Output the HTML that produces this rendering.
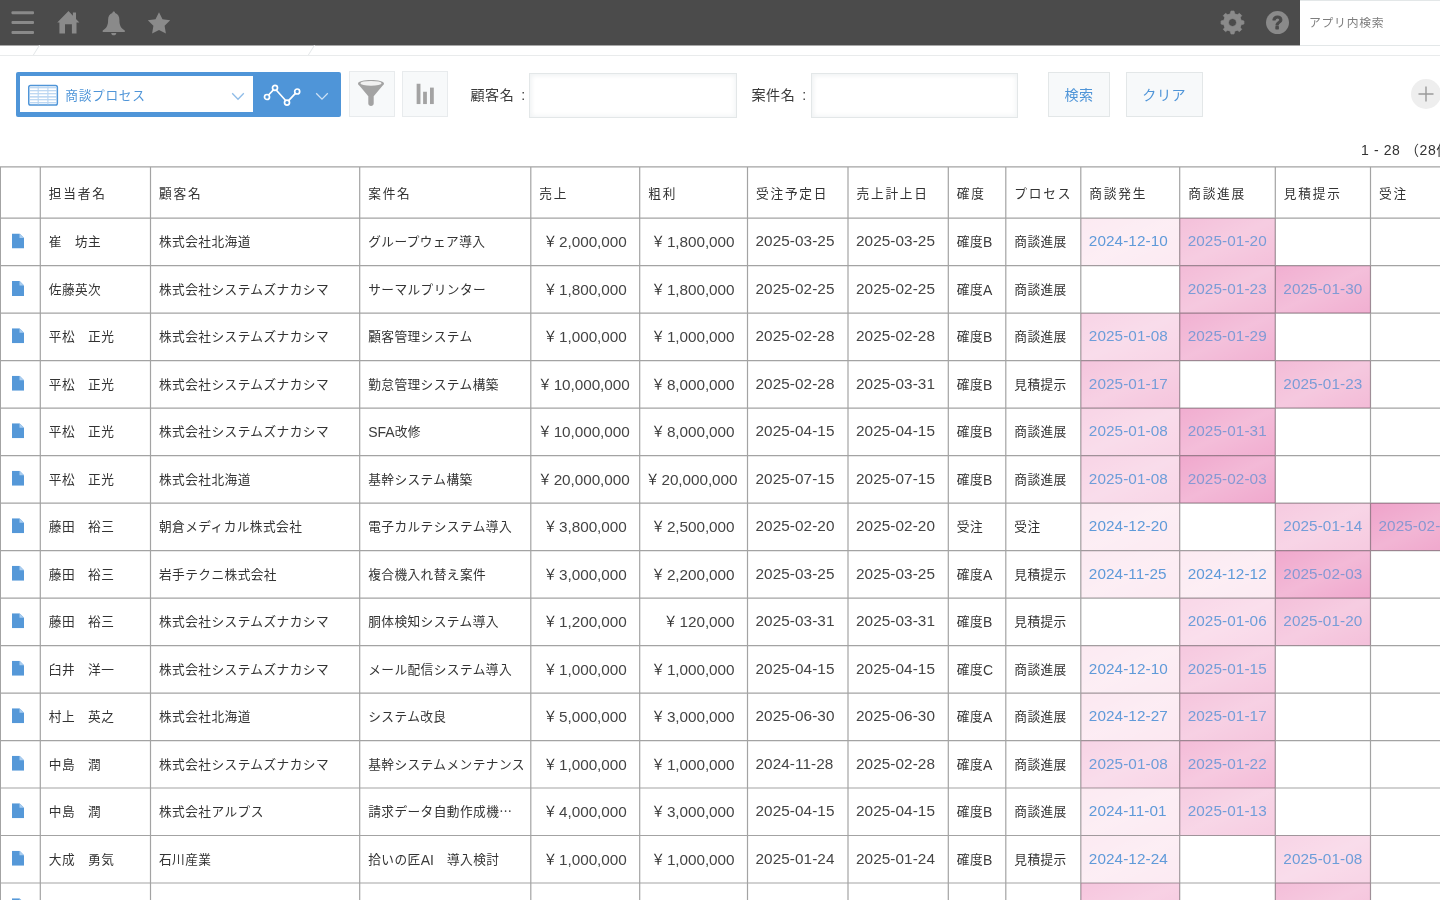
<!DOCTYPE html>
<html lang="ja">
<head>
<meta charset="utf-8">
<title>商談プロセス</title>
<style>
html,body{margin:0;padding:0}
body{width:1440px;height:900px;overflow:hidden;background:#fff;position:relative;
  font-family:"Liberation Sans","Noto Sans CJK JP",sans-serif;font-size:12.7px;letter-spacing:.42px;color:#333;font-weight:400}
*{box-sizing:border-box}
.abs{position:absolute}
/* ---------- global header ---------- */
.hdr{position:absolute;left:0;top:0;width:1440px;height:46px;background:#4b4b4b;border-bottom:1px solid #a8a8a8}
.hdr svg{position:absolute}
.srch{position:absolute;left:1300px;top:0;width:140px;height:46px;background:#fff;border-top:1px solid #e3e7e8;border-bottom:1px solid #e3e7e8;
  font-size:11.8px;letter-spacing:.75px;color:#7d7d7d;line-height:44px;padding-left:9px;white-space:nowrap}
.crumb{position:absolute;left:0;top:46px;width:1440px;height:9.5px;border-bottom:1px solid #e9ebec;background:#fff}
.crumb i{position:absolute;top:-1px;height:10px;width:1px;background:#e3e7e8;transform:skewX(-32deg)}
/* ---------- toolbar ---------- */
.view{position:absolute;left:15.5px;top:72px;width:325.5px;height:44.5px;background:#4f95d8;border-radius:2px}
.view .sel{position:absolute;left:4.5px;top:4px;width:233px;height:36px;background:#fff}
.view .name{position:absolute;left:45.3px;top:.5px;line-height:38px;font-weight:400;color:#4f95d8;font-size:12.7px;letter-spacing:.7px;white-space:nowrap}
.btn{position:absolute;top:71px;height:46px;background:#f7f9fa;border:1px solid #e8ebed}
.lbl{position:absolute;top:84px;height:22px;line-height:22px;font-size:14.1px;letter-spacing:.5px;white-space:nowrap;color:#3a3a3a;word-spacing:2.5px}
.inp{position:absolute;top:73px;height:45px;background:#fff;border:1px solid #e3e7e8;box-shadow:inset 2px 2px 4px #f1f3f4, inset -2px -2px 4px #f5f7f8}
.tbtn{position:absolute;top:72px;height:45px;background:#f7f9fa;border:1px solid #e3e7e8;color:#4f95d8;font-size:14.1px;letter-spacing:.5px;text-align:center;line-height:44px;white-space:nowrap}
.plus{position:absolute;left:1411px;top:78.8px;width:30px;height:30px;border-radius:50%;background:#eeeeee}
.pager{position:absolute;left:1361px;top:139px;height:22px;line-height:22px;font-size:14px;white-space:nowrap;color:#333;letter-spacing:.6px}
/* ---------- table ---------- */
.grid{position:absolute;left:0;top:0}
.thead{position:absolute;left:0;width:1440px}
.th{position:absolute;top:0;height:100%;padding-left:8.5px;display:flex;align-items:center;letter-spacing:1.77px;white-space:nowrap;color:#333}
.tr{position:absolute;left:0;top:0;width:1440px;height:47.5px}
.td{position:absolute;top:0;height:47.5px;padding-left:8.5px;display:flex;align-items:center;white-space:nowrap;overflow:visible}
.td.c0{padding-left:11.7px}
.td.num{justify-content:flex-end;padding-left:0;padding-right:13px}
.td.num.wide{padding-right:10px}
.l{font-size:15.3px;letter-spacing:-.05px;color:#444;position:relative;top:.3px}
.td.dt{padding-left:8px}
.td.dt .l{letter-spacing:.08px}
.yen{font-size:13.8px;letter-spacing:0;margin-right:1.9px;position:relative;top:-.5px}
.td.lk .l{color:inherit}
.a{font-size:14px;letter-spacing:0;color:#3c3c3c;position:relative;top:.5px}
.el{font-family:"Noto Sans CJK JP",sans-serif}
.td.lk{color:#4a8fd6}
.sp{font-size:0;letter-spacing:0}
.doc{display:block;position:relative;top:.2px}
</style>
</head>
<body>
<div id="app" style="position:absolute;left:0;top:0;width:1440px;height:900px;will-change:transform">
<!-- global header -->
<div class="hdr">
  <svg style="left:11px;top:10px" width="24" height="25" viewBox="0 0 24 25"><g fill="#8a8a8a"><rect x="0.5" y="1.3" width="22.5" height="2.9" rx="1"/><rect x="0.5" y="11.1" width="22.5" height="2.9" rx="1"/><rect x="0.5" y="21.1" width="22.5" height="2.9" rx="1"/></g></svg>
  <svg style="left:56px;top:10px" width="25" height="25" viewBox="0 0 25 25"><path fill="#8a8a8a" d="M12.5 1.1 L1.25 12.4 H3.4 V23.6 H9 V14.25 H15.9 V23.6 H20.5 V12.4 H23.4 L20 8.9 V2.4 H16.9 V5.66 Z"/></svg>
  <svg style="left:102px;top:9.5px" width="25" height="27" viewBox="0 0 25 27"><path fill="#8a8a8a" d="M11.75 1.6 C12.6 1.6 13.1 2.2 13.1 3.1 C16 3.9 17.4 6.6 17.4 10 C17.4 15 18.6 18 22.8 20.6 V22 H0.7 V20.6 C4.9 18 6.1 15 6.1 10 C6.1 6.6 7.5 3.9 10.4 3.1 C10.4 2.2 10.9 1.6 11.75 1.6 Z M9.25 22.9 H14.25 C14.25 24.4 13.2 25.3 11.75 25.3 C10.3 25.3 9.25 24.4 9.25 22.9 Z"/></svg>
  <svg style="left:147.4px;top:10.8px" width="24" height="24" viewBox="0 0 24 24"><path fill="#8a8a8a" d="M12 1.2 L15.5 8.2 L23.2 9.3 L17.6 14.8 L18.9 22.5 L12 18.9 L5.1 22.5 L6.4 14.8 L0.8 9.3 L8.5 8.2 Z"/></svg>
  <svg style="left:1219.6px;top:9.6px" width="25" height="25" viewBox="-12.5 -12.5 25 25"><path fill="#8a8a8a" fill-rule="evenodd" stroke="#8a8a8a" stroke-width="0.8" stroke-linejoin="round" d="M-2.10 -8.75 L-1.50 -11.40 L1.50 -11.40 L2.10 -8.75 L4.70 -7.67 L7.00 -9.12 L9.12 -7.00 L7.67 -4.70 L8.75 -2.10 L11.40 -1.50 L11.40 1.50 L8.75 2.10 L7.67 4.70 L9.12 7.00 L7.00 9.12 L4.70 7.67 L2.10 8.75 L1.50 11.40 L-1.50 11.40 L-2.10 8.75 L-4.70 7.67 L-7.00 9.12 L-9.12 7.00 L-7.67 4.70 L-8.75 2.10 L-11.40 1.50 L-11.40 -1.50 L-8.75 -2.10 L-7.67 -4.70 L-9.12 -7.00 L-7.00 -9.12 L-4.70 -7.67 Z M0 -4.00 A4.00 4.00 0 1 0 0.01 -4.00 Z"/></svg>
  <svg style="left:1265px;top:10px" width="25" height="25" viewBox="0 0 25 25"><circle cx="12.5" cy="12.6" r="11.5" fill="#8a8a8a"/><text x="12.5" y="19.2" text-anchor="middle" style="font:bold 18px 'Liberation Sans',sans-serif;letter-spacing:0" fill="#4b4b4b" stroke="#4b4b4b" stroke-width=".9" stroke-linejoin="round">?</text></svg>
</div>
<div class="srch">アプリ内検索</div>
<div class="crumb"><i style="left:35.5px"></i><i style="left:311px"></i></div>

<!-- toolbar -->
<div class="view">
  <div class="sel">
    <svg class="abs" style="left:7.1px;top:7.7px" width="33" height="23" viewBox="0 0 33 23"><rect x="1.75" y="1.55" width="28.6" height="19.4" rx="1.8" fill="#fff" stroke="#4f95d8" stroke-width="1.5"/><path d="M2.5 3.7H29.6M2.5 6.8H29.6M2.5 9.8H29.6M2.5 12.9H29.6M2.5 15.8H29.6M2.5 18.8H29.6" stroke="#a9cbee" stroke-width="1.1" fill="none"/><path d="M11.2 2.3V20.2M20.9 2.3V20.2" stroke="#b9d5f1" stroke-width="1.1" fill="none"/></svg>
    <div class="name">商談プロセス</div>
    <svg class="abs" style="left:211px;top:15.5px" width="14" height="9" viewBox="0 0 14 9"><path d="M1.2 1.2L7 7.2L12.8 1.2" fill="none" stroke="#8fbce8" stroke-width="1.3"/></svg>
  </div>
  <svg class="abs" style="left:245px;top:11px" width="42" height="26" viewBox="0 0 42 26"><g fill="none" stroke="#fff" stroke-width="1.7"><path d="M7.6 12L12.4 6.8M15.4 7.2L24.4 17.2M27.6 17.6L34.4 10.4"/><circle cx="6" cy="14" r="2.5"/><circle cx="14" cy="4.8" r="2.5"/><circle cx="26" cy="19.6" r="2.5"/><circle cx="36.2" cy="8.5" r="2.5"/></g></svg>
  <svg class="abs" style="left:299px;top:19.5px" width="14" height="9" viewBox="0 0 14 9"><path d="M1.2 1.2L7 7.2L12.8 1.2" fill="none" stroke="#fff" stroke-width="1.25" opacity=".72"/></svg>
</div>
<div class="btn" style="left:349px;width:45.5px">
  <svg class="abs" style="left:7px;top:7.3px" width="28" height="28" viewBox="0 0 28 28"><path fill="#a3a3a3" d="M1 4.5 C1 2.3 7 1 14 1 C21 1 27 2.3 27 4.5 C27 5.4 26.3 6 25.5 6.8 L16.7 17.2 V24.6 C16.7 26.2 15.5 27 14 27 C12.5 27 11.3 26.2 11.3 24.6 V17.2 L2.5 6.8 C1.7 6 1 5.4 1 4.5 Z"/><ellipse cx="14" cy="4.3" rx="10.6" ry="2.4" fill="#f1f1f1"/></svg>
</div>
<div class="btn" style="left:402px;width:46px">
  <svg class="abs" style="left:13px;top:11px" width="19" height="23" viewBox="0 0 19 23"><g fill="#a3a3a3"><rect x="0.65" y="0.75" width="3.8" height="20.3"/><rect x="7.1" y="8.75" width="3.8" height="12.3"/><rect x="14" y="4.6" width="3.8" height="16.45"/></g></svg>
</div>
<div class="lbl" style="left:470.5px">顧客名 :</div>
<div class="inp" style="left:529px;width:207.5px"></div>
<div class="lbl" style="left:751.5px">案件名 :</div>
<div class="inp" style="left:811px;width:206.5px"></div>
<div class="tbtn" style="left:1048px;width:62px">検索</div>
<div class="tbtn" style="left:1125.5px;width:77.5px">クリア</div>
<div class="plus"><svg class="abs" style="left:7px;top:7px" width="16" height="16" viewBox="0 0 16 16"><path d="M8 0.5V15.5M0.5 8H15.5" stroke="#9a9a9a" stroke-width="1.4" fill="none"/></svg></div>
<div class="pager">1 - 28 （28件中）</div>

<!-- record table -->
<svg class="grid" width="1440" height="900" viewBox="0 0 1440 900"><defs><linearGradient id="sheen" x1="0" y1="0" x2="1" y2="1"><stop offset="0" stop-color="#fff" stop-opacity="0"/><stop offset=".5" stop-color="#fff" stop-opacity=".2"/><stop offset="1" stop-color="#fff" stop-opacity="0"/></linearGradient></defs><rect x="1080.8" y="218.2" width="98.9" height="47.48" fill="#fceaf2"/><rect x="1080.8" y="218.2" width="98.9" height="47.48" fill="url(#sheen)"/><rect x="1179.7" y="218.2" width="95.6" height="47.48" fill="#f4c0da"/><rect x="1179.7" y="218.2" width="95.6" height="47.48" fill="url(#sheen)"/><rect x="1179.7" y="265.69" width="95.6" height="47.48" fill="#f3bbd7"/><rect x="1179.7" y="265.69" width="95.6" height="47.48" fill="url(#sheen)"/><rect x="1275.3" y="265.69" width="95.2" height="47.48" fill="#f1afd1"/><rect x="1275.3" y="265.69" width="95.2" height="47.48" fill="url(#sheen)"/><rect x="1080.8" y="313.17" width="98.9" height="47.48" fill="#f8d4e6"/><rect x="1080.8" y="313.17" width="98.9" height="47.48" fill="url(#sheen)"/><rect x="1179.7" y="313.17" width="95.6" height="47.48" fill="#f1b1d2"/><rect x="1179.7" y="313.17" width="95.6" height="47.48" fill="url(#sheen)"/><rect x="1080.8" y="360.65" width="98.9" height="47.48" fill="#f5c5dd"/><rect x="1080.8" y="360.65" width="98.9" height="47.48" fill="url(#sheen)"/><rect x="1275.3" y="360.65" width="95.2" height="47.48" fill="#f3bbd7"/><rect x="1275.3" y="360.65" width="95.2" height="47.48" fill="url(#sheen)"/><rect x="1080.8" y="408.14" width="98.9" height="47.48" fill="#f8d4e6"/><rect x="1080.8" y="408.14" width="98.9" height="47.48" fill="url(#sheen)"/><rect x="1179.7" y="408.14" width="95.6" height="47.48" fill="#f1add0"/><rect x="1179.7" y="408.14" width="95.6" height="47.48" fill="url(#sheen)"/><rect x="1080.8" y="455.62" width="98.9" height="47.48" fill="#f8d4e6"/><rect x="1080.8" y="455.62" width="98.9" height="47.48" fill="url(#sheen)"/><rect x="1179.7" y="455.62" width="95.6" height="47.48" fill="#f0a8cd"/><rect x="1179.7" y="455.62" width="95.6" height="47.48" fill="url(#sheen)"/><rect x="1080.8" y="503.11" width="98.9" height="47.48" fill="#fceaf2"/><rect x="1080.8" y="503.11" width="98.9" height="47.48" fill="url(#sheen)"/><rect x="1275.3" y="503.11" width="95.2" height="47.48" fill="#f6cae0"/><rect x="1275.3" y="503.11" width="95.2" height="47.48" fill="url(#sheen)"/><rect x="1370.5" y="503.11" width="99.5" height="47.48" fill="#efa3ca"/><rect x="1370.5" y="503.11" width="99.5" height="47.48" fill="url(#sheen)"/><rect x="1080.8" y="550.6" width="98.9" height="47.48" fill="#fceaf2"/><rect x="1080.8" y="550.6" width="98.9" height="47.48" fill="url(#sheen)"/><rect x="1179.7" y="550.6" width="95.6" height="47.48" fill="#fceaf2"/><rect x="1179.7" y="550.6" width="95.6" height="47.48" fill="url(#sheen)"/><rect x="1275.3" y="550.6" width="95.2" height="47.48" fill="#f0a8cd"/><rect x="1275.3" y="550.6" width="95.2" height="47.48" fill="url(#sheen)"/><rect x="1179.7" y="598.08" width="95.6" height="47.48" fill="#f9d7e8"/><rect x="1179.7" y="598.08" width="95.6" height="47.48" fill="url(#sheen)"/><rect x="1275.3" y="598.08" width="95.2" height="47.48" fill="#f4c0da"/><rect x="1275.3" y="598.08" width="95.2" height="47.48" fill="url(#sheen)"/><rect x="1080.8" y="645.57" width="98.9" height="47.48" fill="#fceaf2"/><rect x="1080.8" y="645.57" width="98.9" height="47.48" fill="url(#sheen)"/><rect x="1179.7" y="645.57" width="95.6" height="47.48" fill="#f6c8df"/><rect x="1179.7" y="645.57" width="95.6" height="47.48" fill="url(#sheen)"/><rect x="1080.8" y="693.05" width="98.9" height="47.48" fill="#fce8f1"/><rect x="1080.8" y="693.05" width="98.9" height="47.48" fill="url(#sheen)"/><rect x="1179.7" y="693.05" width="95.6" height="47.48" fill="#f5c5dd"/><rect x="1179.7" y="693.05" width="95.6" height="47.48" fill="url(#sheen)"/><rect x="1080.8" y="740.54" width="98.9" height="47.48" fill="#f8d4e6"/><rect x="1080.8" y="740.54" width="98.9" height="47.48" fill="url(#sheen)"/><rect x="1179.7" y="740.54" width="95.6" height="47.48" fill="#f4bcd8"/><rect x="1179.7" y="740.54" width="95.6" height="47.48" fill="url(#sheen)"/><rect x="1080.8" y="788.02" width="98.9" height="47.48" fill="#fceaf2"/><rect x="1080.8" y="788.02" width="98.9" height="47.48" fill="url(#sheen)"/><rect x="1179.7" y="788.02" width="95.6" height="47.48" fill="#f6cce1"/><rect x="1179.7" y="788.02" width="95.6" height="47.48" fill="url(#sheen)"/><rect x="1080.8" y="835.5" width="98.9" height="47.48" fill="#fceaf2"/><rect x="1080.8" y="835.5" width="98.9" height="47.48" fill="url(#sheen)"/><rect x="1275.3" y="835.5" width="95.2" height="47.48" fill="#f8d4e6"/><rect x="1275.3" y="835.5" width="95.2" height="47.48" fill="url(#sheen)"/><rect x="1080.8" y="882.99" width="98.9" height="47.48" fill="#f6c6de"/><rect x="1080.8" y="882.99" width="98.9" height="47.48" fill="url(#sheen)"/><rect x="1275.3" y="882.99" width="95.2" height="47.48" fill="#f4bed9"/><rect x="1275.3" y="882.99" width="95.2" height="47.48" fill="url(#sheen)"/><path d="M0.4 166.3V900M40.3 166.3V900M150.5 166.3V900M359.7 166.3V900M530.8 166.3V900M639.7 166.3V900M747.5 166.3V900M848 166.3V900M948.3 166.3V900M1005.8 166.3V900M1080.8 166.3V900M1179.7 166.3V900M1275.3 166.3V900M1370.5 166.3V900M0 166.8H1440M0 218.2H1440M0 265.69H1440M0 313.17H1440M0 360.65H1440M0 408.14H1440M0 455.62H1440M0 503.11H1440M0 550.59H1440M0 598.08H1440M0 645.56H1440M0 693.05H1440M0 740.53H1440M0 788.02H1440M0 835.5H1440M0 882.99H1440M0 930.48H1440" fill="none" stroke="#000" stroke-opacity=".36" stroke-width="1.2"/></svg>
<div class="thead" style="top:166.8px;height:51.4px"><div class="th" style="left:40.3px;width:110.2px">担当者名</div><div class="th" style="left:150.5px;width:209.2px">顧客名</div><div class="th" style="left:359.7px;width:171.1px">案件名</div><div class="th" style="left:530.8px;width:108.9px">売上</div><div class="th" style="left:639.7px;width:107.8px">粗利</div><div class="th" style="left:747.5px;width:100.5px">受注予定日</div><div class="th" style="left:848px;width:100.3px">売上計上日</div><div class="th" style="left:948.3px;width:57.5px">確度</div><div class="th" style="left:1005.8px;width:75px">プロセス</div><div class="th" style="left:1080.8px;width:98.9px">商談発生</div><div class="th" style="left:1179.7px;width:95.6px">商談進展</div><div class="th" style="left:1275.3px;width:95.2px">見積提示</div><div class="th" style="left:1370.5px;width:99.5px">受注</div></div>
<div class="tr" style="transform:translateY(217.4px)"><div class="td c0" style="left:0.4px;width:39.9px"><svg class="doc" viewBox="0 0 12 15" width="12" height="15"><path d="M0 0H7.5L12 4.5V15H0Z" fill="#5598d8"/><path d="M7.5 0V4.5H12Z" fill="#a9cdf0"/></svg></div><div class="td" style="left:40.3px;width:110.2px"><span>崔　坊主</span></div><div class="td" style="left:150.5px;width:209.2px"><span>株式会社北海道</span></div><div class="td" style="left:359.7px;width:171.1px"><span>グループウェア導入</span></div><div class="td num" style="left:530.8px;width:108.9px"><span><span class="yen">￥</span><span class="sp"> </span><span class="l">2,000,000</span></span></div><div class="td num" style="left:639.7px;width:107.8px"><span><span class="yen">￥</span><span class="sp"> </span><span class="l">1,800,000</span></span></div><div class="td dt" style="left:747.5px;width:100.5px"><span><span class="l">2025-03-25</span></span></div><div class="td dt" style="left:848px;width:100.3px"><span><span class="l">2025-03-25</span></span></div><div class="td" style="left:948.3px;width:57.5px"><span>確度<span class="a">B</span></span></div><div class="td" style="left:1005.8px;width:75px"><span>商談進展</span></div><div class="td dt lk" style="left:1080.8px;width:98.9px;color:#5f9ad9"><span><span class="l">2024-12-10</span></span></div><div class="td dt lk" style="left:1179.7px;width:95.6px;color:#799cd7"><span><span class="l">2025-01-20</span></span></div></div>
<div class="tr" style="transform:translateY(264.88px)"><div class="td c0" style="left:0.4px;width:39.9px"><svg class="doc" viewBox="0 0 12 15" width="12" height="15"><path d="M0 0H7.5L12 4.5V15H0Z" fill="#5598d8"/><path d="M7.5 0V4.5H12Z" fill="#a9cdf0"/></svg></div><div class="td" style="left:40.3px;width:110.2px"><span>佐藤英次</span></div><div class="td" style="left:150.5px;width:209.2px"><span>株式会社システムズナカシマ</span></div><div class="td" style="left:359.7px;width:171.1px"><span>サーマルプリンター</span></div><div class="td num" style="left:530.8px;width:108.9px"><span><span class="yen">￥</span><span class="sp"> </span><span class="l">1,800,000</span></span></div><div class="td num" style="left:639.7px;width:107.8px"><span><span class="yen">￥</span><span class="sp"> </span><span class="l">1,800,000</span></span></div><div class="td dt" style="left:747.5px;width:100.5px"><span><span class="l">2025-02-25</span></span></div><div class="td dt" style="left:848px;width:100.3px"><span><span class="l">2025-02-25</span></span></div><div class="td" style="left:948.3px;width:57.5px"><span>確度<span class="a">A</span></span></div><div class="td" style="left:1005.8px;width:75px"><span>商談進展</span></div><div class="td dt lk" style="left:1179.7px;width:95.6px;color:#7b9cd6"><span><span class="l">2025-01-23</span></span></div><div class="td dt lk" style="left:1275.3px;width:95.2px;color:#829ad4"><span><span class="l">2025-01-30</span></span></div></div>
<div class="tr" style="transform:translateY(312.37px)"><div class="td c0" style="left:0.4px;width:39.9px"><svg class="doc" viewBox="0 0 12 15" width="12" height="15"><path d="M0 0H7.5L12 4.5V15H0Z" fill="#5598d8"/><path d="M7.5 0V4.5H12Z" fill="#a9cdf0"/></svg></div><div class="td" style="left:40.3px;width:110.2px"><span>平松　正光</span></div><div class="td" style="left:150.5px;width:209.2px"><span>株式会社システムズナカシマ</span></div><div class="td" style="left:359.7px;width:171.1px"><span>顧客管理システム</span></div><div class="td num" style="left:530.8px;width:108.9px"><span><span class="yen">￥</span><span class="sp"> </span><span class="l">1,000,000</span></span></div><div class="td num" style="left:639.7px;width:107.8px"><span><span class="yen">￥</span><span class="sp"> </span><span class="l">1,000,000</span></span></div><div class="td dt" style="left:747.5px;width:100.5px"><span><span class="l">2025-02-28</span></span></div><div class="td dt" style="left:848px;width:100.3px"><span><span class="l">2025-02-28</span></span></div><div class="td" style="left:948.3px;width:57.5px"><span>確度<span class="a">B</span></span></div><div class="td" style="left:1005.8px;width:75px"><span>商談進展</span></div><div class="td dt lk" style="left:1080.8px;width:98.9px;color:#6d9dd9"><span><span class="l">2025-01-08</span></span></div><div class="td dt lk" style="left:1179.7px;width:95.6px;color:#819ad5"><span><span class="l">2025-01-29</span></span></div></div>
<div class="tr" style="transform:translateY(359.85px)"><div class="td c0" style="left:0.4px;width:39.9px"><svg class="doc" viewBox="0 0 12 15" width="12" height="15"><path d="M0 0H7.5L12 4.5V15H0Z" fill="#5598d8"/><path d="M7.5 0V4.5H12Z" fill="#a9cdf0"/></svg></div><div class="td" style="left:40.3px;width:110.2px"><span>平松　正光</span></div><div class="td" style="left:150.5px;width:209.2px"><span>株式会社システムズナカシマ</span></div><div class="td" style="left:359.7px;width:171.1px"><span>勤怠管理システム構築</span></div><div class="td num wide" style="left:530.8px;width:108.9px"><span><span class="yen">￥</span><span class="sp"> </span><span class="l">10,000,000</span></span></div><div class="td num" style="left:639.7px;width:107.8px"><span><span class="yen">￥</span><span class="sp"> </span><span class="l">8,000,000</span></span></div><div class="td dt" style="left:747.5px;width:100.5px"><span><span class="l">2025-02-28</span></span></div><div class="td dt" style="left:848px;width:100.3px"><span><span class="l">2025-03-31</span></span></div><div class="td" style="left:948.3px;width:57.5px"><span>確度<span class="a">B</span></span></div><div class="td" style="left:1005.8px;width:75px"><span>見積提示</span></div><div class="td dt lk" style="left:1080.8px;width:98.9px;color:#769dd8"><span><span class="l">2025-01-17</span></span></div><div class="td dt lk" style="left:1275.3px;width:95.2px;color:#7b9cd6"><span><span class="l">2025-01-23</span></span></div></div>
<div class="tr" style="transform:translateY(407.34px)"><div class="td c0" style="left:0.4px;width:39.9px"><svg class="doc" viewBox="0 0 12 15" width="12" height="15"><path d="M0 0H7.5L12 4.5V15H0Z" fill="#5598d8"/><path d="M7.5 0V4.5H12Z" fill="#a9cdf0"/></svg></div><div class="td" style="left:40.3px;width:110.2px"><span>平松　正光</span></div><div class="td" style="left:150.5px;width:209.2px"><span>株式会社システムズナカシマ</span></div><div class="td" style="left:359.7px;width:171.1px"><span><span class="a">SFA</span>改修</span></div><div class="td num wide" style="left:530.8px;width:108.9px"><span><span class="yen">￥</span><span class="sp"> </span><span class="l">10,000,000</span></span></div><div class="td num" style="left:639.7px;width:107.8px"><span><span class="yen">￥</span><span class="sp"> </span><span class="l">8,000,000</span></span></div><div class="td dt" style="left:747.5px;width:100.5px"><span><span class="l">2025-04-15</span></span></div><div class="td dt" style="left:848px;width:100.3px"><span><span class="l">2025-04-15</span></span></div><div class="td" style="left:948.3px;width:57.5px"><span>確度<span class="a">B</span></span></div><div class="td" style="left:1005.8px;width:75px"><span>商談進展</span></div><div class="td dt lk" style="left:1080.8px;width:98.9px;color:#6d9dd9"><span><span class="l">2025-01-08</span></span></div><div class="td dt lk" style="left:1179.7px;width:95.6px;color:#8399d4"><span><span class="l">2025-01-31</span></span></div></div>
<div class="tr" style="transform:translateY(454.82px)"><div class="td c0" style="left:0.4px;width:39.9px"><svg class="doc" viewBox="0 0 12 15" width="12" height="15"><path d="M0 0H7.5L12 4.5V15H0Z" fill="#5598d8"/><path d="M7.5 0V4.5H12Z" fill="#a9cdf0"/></svg></div><div class="td" style="left:40.3px;width:110.2px"><span>平松　正光</span></div><div class="td" style="left:150.5px;width:209.2px"><span>株式会社北海道</span></div><div class="td" style="left:359.7px;width:171.1px"><span>基幹システム構築</span></div><div class="td num wide" style="left:530.8px;width:108.9px"><span><span class="yen">￥</span><span class="sp"> </span><span class="l">20,000,000</span></span></div><div class="td num wide" style="left:639.7px;width:107.8px"><span><span class="yen">￥</span><span class="sp"> </span><span class="l">20,000,000</span></span></div><div class="td dt" style="left:747.5px;width:100.5px"><span><span class="l">2025-07-15</span></span></div><div class="td dt" style="left:848px;width:100.3px"><span><span class="l">2025-07-15</span></span></div><div class="td" style="left:948.3px;width:57.5px"><span>確度<span class="a">B</span></span></div><div class="td" style="left:1005.8px;width:75px"><span>商談進展</span></div><div class="td dt lk" style="left:1080.8px;width:98.9px;color:#6d9dd9"><span><span class="l">2025-01-08</span></span></div><div class="td dt lk" style="left:1179.7px;width:95.6px;color:#8698d3"><span><span class="l">2025-02-03</span></span></div></div>
<div class="tr" style="transform:translateY(502.31px)"><div class="td c0" style="left:0.4px;width:39.9px"><svg class="doc" viewBox="0 0 12 15" width="12" height="15"><path d="M0 0H7.5L12 4.5V15H0Z" fill="#5598d8"/><path d="M7.5 0V4.5H12Z" fill="#a9cdf0"/></svg></div><div class="td" style="left:40.3px;width:110.2px"><span>藤田　裕三</span></div><div class="td" style="left:150.5px;width:209.2px"><span>朝倉メディカル株式会社</span></div><div class="td" style="left:359.7px;width:171.1px"><span>電子カルテシステム導入</span></div><div class="td num" style="left:530.8px;width:108.9px"><span><span class="yen">￥</span><span class="sp"> </span><span class="l">3,800,000</span></span></div><div class="td num" style="left:639.7px;width:107.8px"><span><span class="yen">￥</span><span class="sp"> </span><span class="l">2,500,000</span></span></div><div class="td dt" style="left:747.5px;width:100.5px"><span><span class="l">2025-02-20</span></span></div><div class="td dt" style="left:848px;width:100.3px"><span><span class="l">2025-02-20</span></span></div><div class="td" style="left:948.3px;width:57.5px"><span>受注</span></div><div class="td" style="left:1005.8px;width:75px"><span>受注</span></div><div class="td dt lk" style="left:1080.8px;width:98.9px;color:#5f9ad9"><span><span class="l">2024-12-20</span></span></div><div class="td dt lk" style="left:1275.3px;width:95.2px;color:#739dd8"><span><span class="l">2025-01-14</span></span></div><div class="td dt lk" style="left:1370.5px;width:99.5px;color:#8997d1"><span><span class="l">2025-02-10</span></span></div></div>
<div class="tr" style="transform:translateY(549.8px)"><div class="td c0" style="left:0.4px;width:39.9px"><svg class="doc" viewBox="0 0 12 15" width="12" height="15"><path d="M0 0H7.5L12 4.5V15H0Z" fill="#5598d8"/><path d="M7.5 0V4.5H12Z" fill="#a9cdf0"/></svg></div><div class="td" style="left:40.3px;width:110.2px"><span>藤田　裕三</span></div><div class="td" style="left:150.5px;width:209.2px"><span>岩手テクニ株式会社</span></div><div class="td" style="left:359.7px;width:171.1px"><span>複合機入れ替え案件</span></div><div class="td num" style="left:530.8px;width:108.9px"><span><span class="yen">￥</span><span class="sp"> </span><span class="l">3,000,000</span></span></div><div class="td num" style="left:639.7px;width:107.8px"><span><span class="yen">￥</span><span class="sp"> </span><span class="l">2,200,000</span></span></div><div class="td dt" style="left:747.5px;width:100.5px"><span><span class="l">2025-03-25</span></span></div><div class="td dt" style="left:848px;width:100.3px"><span><span class="l">2025-03-25</span></span></div><div class="td" style="left:948.3px;width:57.5px"><span>確度<span class="a">A</span></span></div><div class="td" style="left:1005.8px;width:75px"><span>見積提示</span></div><div class="td dt lk" style="left:1080.8px;width:98.9px;color:#5f9ad9"><span><span class="l">2024-11-25</span></span></div><div class="td dt lk" style="left:1179.7px;width:95.6px;color:#5f9ad9"><span><span class="l">2024-12-12</span></span></div><div class="td dt lk" style="left:1275.3px;width:95.2px;color:#8698d3"><span><span class="l">2025-02-03</span></span></div></div>
<div class="tr" style="transform:translateY(597.28px)"><div class="td c0" style="left:0.4px;width:39.9px"><svg class="doc" viewBox="0 0 12 15" width="12" height="15"><path d="M0 0H7.5L12 4.5V15H0Z" fill="#5598d8"/><path d="M7.5 0V4.5H12Z" fill="#a9cdf0"/></svg></div><div class="td" style="left:40.3px;width:110.2px"><span>藤田　裕三</span></div><div class="td" style="left:150.5px;width:209.2px"><span>株式会社システムズナカシマ</span></div><div class="td" style="left:359.7px;width:171.1px"><span>胴体検知システム導入</span></div><div class="td num" style="left:530.8px;width:108.9px"><span><span class="yen">￥</span><span class="sp"> </span><span class="l">1,200,000</span></span></div><div class="td num" style="left:639.7px;width:107.8px"><span><span class="yen">￥</span><span class="sp"> </span><span class="l">120,000</span></span></div><div class="td dt" style="left:747.5px;width:100.5px"><span><span class="l">2025-03-31</span></span></div><div class="td dt" style="left:848px;width:100.3px"><span><span class="l">2025-03-31</span></span></div><div class="td" style="left:948.3px;width:57.5px"><span>確度<span class="a">B</span></span></div><div class="td" style="left:1005.8px;width:75px"><span>見積提示</span></div><div class="td dt lk" style="left:1179.7px;width:95.6px;color:#6b9dd9"><span><span class="l">2025-01-06</span></span></div><div class="td dt lk" style="left:1275.3px;width:95.2px;color:#799cd7"><span><span class="l">2025-01-20</span></span></div></div>
<div class="tr" style="transform:translateY(644.77px)"><div class="td c0" style="left:0.4px;width:39.9px"><svg class="doc" viewBox="0 0 12 15" width="12" height="15"><path d="M0 0H7.5L12 4.5V15H0Z" fill="#5598d8"/><path d="M7.5 0V4.5H12Z" fill="#a9cdf0"/></svg></div><div class="td" style="left:40.3px;width:110.2px"><span>臼井　洋一</span></div><div class="td" style="left:150.5px;width:209.2px"><span>株式会社システムズナカシマ</span></div><div class="td" style="left:359.7px;width:171.1px"><span>メール配信システム導入</span></div><div class="td num" style="left:530.8px;width:108.9px"><span><span class="yen">￥</span><span class="sp"> </span><span class="l">1,000,000</span></span></div><div class="td num" style="left:639.7px;width:107.8px"><span><span class="yen">￥</span><span class="sp"> </span><span class="l">1,000,000</span></span></div><div class="td dt" style="left:747.5px;width:100.5px"><span><span class="l">2025-04-15</span></span></div><div class="td dt" style="left:848px;width:100.3px"><span><span class="l">2025-04-15</span></span></div><div class="td" style="left:948.3px;width:57.5px"><span>確度<span class="a">C</span></span></div><div class="td" style="left:1005.8px;width:75px"><span>商談進展</span></div><div class="td dt lk" style="left:1080.8px;width:98.9px;color:#5f9ad9"><span><span class="l">2024-12-10</span></span></div><div class="td dt lk" style="left:1179.7px;width:95.6px;color:#749dd8"><span><span class="l">2025-01-15</span></span></div></div>
<div class="tr" style="transform:translateY(692.25px)"><div class="td c0" style="left:0.4px;width:39.9px"><svg class="doc" viewBox="0 0 12 15" width="12" height="15"><path d="M0 0H7.5L12 4.5V15H0Z" fill="#5598d8"/><path d="M7.5 0V4.5H12Z" fill="#a9cdf0"/></svg></div><div class="td" style="left:40.3px;width:110.2px"><span>村上　英之</span></div><div class="td" style="left:150.5px;width:209.2px"><span>株式会社北海道</span></div><div class="td" style="left:359.7px;width:171.1px"><span>システム改良</span></div><div class="td num" style="left:530.8px;width:108.9px"><span><span class="yen">￥</span><span class="sp"> </span><span class="l">5,000,000</span></span></div><div class="td num" style="left:639.7px;width:107.8px"><span><span class="yen">￥</span><span class="sp"> </span><span class="l">3,000,000</span></span></div><div class="td dt" style="left:747.5px;width:100.5px"><span><span class="l">2025-06-30</span></span></div><div class="td dt" style="left:848px;width:100.3px"><span><span class="l">2025-06-30</span></span></div><div class="td" style="left:948.3px;width:57.5px"><span>確度<span class="a">A</span></span></div><div class="td" style="left:1005.8px;width:75px"><span>商談進展</span></div><div class="td dt lk" style="left:1080.8px;width:98.9px;color:#619ad9"><span><span class="l">2024-12-27</span></span></div><div class="td dt lk" style="left:1179.7px;width:95.6px;color:#769dd8"><span><span class="l">2025-01-17</span></span></div></div>
<div class="tr" style="transform:translateY(739.74px)"><div class="td c0" style="left:0.4px;width:39.9px"><svg class="doc" viewBox="0 0 12 15" width="12" height="15"><path d="M0 0H7.5L12 4.5V15H0Z" fill="#5598d8"/><path d="M7.5 0V4.5H12Z" fill="#a9cdf0"/></svg></div><div class="td" style="left:40.3px;width:110.2px"><span>中島　潤</span></div><div class="td" style="left:150.5px;width:209.2px"><span>株式会社システムズナカシマ</span></div><div class="td" style="left:359.7px;width:171.1px"><span>基幹システムメンテナンス</span></div><div class="td num" style="left:530.8px;width:108.9px"><span><span class="yen">￥</span><span class="sp"> </span><span class="l">1,000,000</span></span></div><div class="td num" style="left:639.7px;width:107.8px"><span><span class="yen">￥</span><span class="sp"> </span><span class="l">1,000,000</span></span></div><div class="td dt" style="left:747.5px;width:100.5px"><span><span class="l">2024-11-28</span></span></div><div class="td dt" style="left:848px;width:100.3px"><span><span class="l">2025-02-28</span></span></div><div class="td" style="left:948.3px;width:57.5px"><span>確度<span class="a">A</span></span></div><div class="td" style="left:1005.8px;width:75px"><span>商談進展</span></div><div class="td dt lk" style="left:1080.8px;width:98.9px;color:#6d9dd9"><span><span class="l">2025-01-08</span></span></div><div class="td dt lk" style="left:1179.7px;width:95.6px;color:#7b9cd7"><span><span class="l">2025-01-22</span></span></div></div>
<div class="tr" style="transform:translateY(787.22px)"><div class="td c0" style="left:0.4px;width:39.9px"><svg class="doc" viewBox="0 0 12 15" width="12" height="15"><path d="M0 0H7.5L12 4.5V15H0Z" fill="#5598d8"/><path d="M7.5 0V4.5H12Z" fill="#a9cdf0"/></svg></div><div class="td" style="left:40.3px;width:110.2px"><span>中島　潤</span></div><div class="td" style="left:150.5px;width:209.2px"><span>株式会社アルプス</span></div><div class="td" style="left:359.7px;width:171.1px"><span>請求データ自動作成機<span class="el">…</span></span></div><div class="td num" style="left:530.8px;width:108.9px"><span><span class="yen">￥</span><span class="sp"> </span><span class="l">4,000,000</span></span></div><div class="td num" style="left:639.7px;width:107.8px"><span><span class="yen">￥</span><span class="sp"> </span><span class="l">3,000,000</span></span></div><div class="td dt" style="left:747.5px;width:100.5px"><span><span class="l">2025-04-15</span></span></div><div class="td dt" style="left:848px;width:100.3px"><span><span class="l">2025-04-15</span></span></div><div class="td" style="left:948.3px;width:57.5px"><span>確度<span class="a">B</span></span></div><div class="td" style="left:1005.8px;width:75px"><span>商談進展</span></div><div class="td dt lk" style="left:1080.8px;width:98.9px;color:#5f9ad9"><span><span class="l">2024-11-01</span></span></div><div class="td dt lk" style="left:1179.7px;width:95.6px;color:#729dd9"><span><span class="l">2025-01-13</span></span></div></div>
<div class="tr" style="transform:translateY(834.7px)"><div class="td c0" style="left:0.4px;width:39.9px"><svg class="doc" viewBox="0 0 12 15" width="12" height="15"><path d="M0 0H7.5L12 4.5V15H0Z" fill="#5598d8"/><path d="M7.5 0V4.5H12Z" fill="#a9cdf0"/></svg></div><div class="td" style="left:40.3px;width:110.2px"><span>大成　勇気</span></div><div class="td" style="left:150.5px;width:209.2px"><span>石川産業</span></div><div class="td" style="left:359.7px;width:171.1px"><span>拾いの匠<span class="a">AI</span>　導入検討</span></div><div class="td num" style="left:530.8px;width:108.9px"><span><span class="yen">￥</span><span class="sp"> </span><span class="l">1,000,000</span></span></div><div class="td num" style="left:639.7px;width:107.8px"><span><span class="yen">￥</span><span class="sp"> </span><span class="l">1,000,000</span></span></div><div class="td dt" style="left:747.5px;width:100.5px"><span><span class="l">2025-01-24</span></span></div><div class="td dt" style="left:848px;width:100.3px"><span><span class="l">2025-01-24</span></span></div><div class="td" style="left:948.3px;width:57.5px"><span>確度<span class="a">B</span></span></div><div class="td" style="left:1005.8px;width:75px"><span>見積提示</span></div><div class="td dt lk" style="left:1080.8px;width:98.9px;color:#5f9ad9"><span><span class="l">2024-12-24</span></span></div><div class="td dt lk" style="left:1275.3px;width:95.2px;color:#6d9dd9"><span><span class="l">2025-01-08</span></span></div></div>
<div class="tr" style="transform:translateY(882.19px)"><div class="td c0" style="left:0.4px;width:39.9px"><svg class="doc" viewBox="0 0 12 15" width="12" height="15"><path d="M0 0H7.5L12 4.5V15H0Z" fill="#5598d8"/><path d="M7.5 0V4.5H12Z" fill="#a9cdf0"/></svg></div><div class="td dt lk" style="left:1080.8px;width:98.9px;color:#759dd8"><span><span class="l">2025-01-16</span></span></div><div class="td dt lk" style="left:1275.3px;width:95.2px;color:#7a9cd7"><span><span class="l">2025-01-21</span></span></div></div>
</div>
</body>
</html>
